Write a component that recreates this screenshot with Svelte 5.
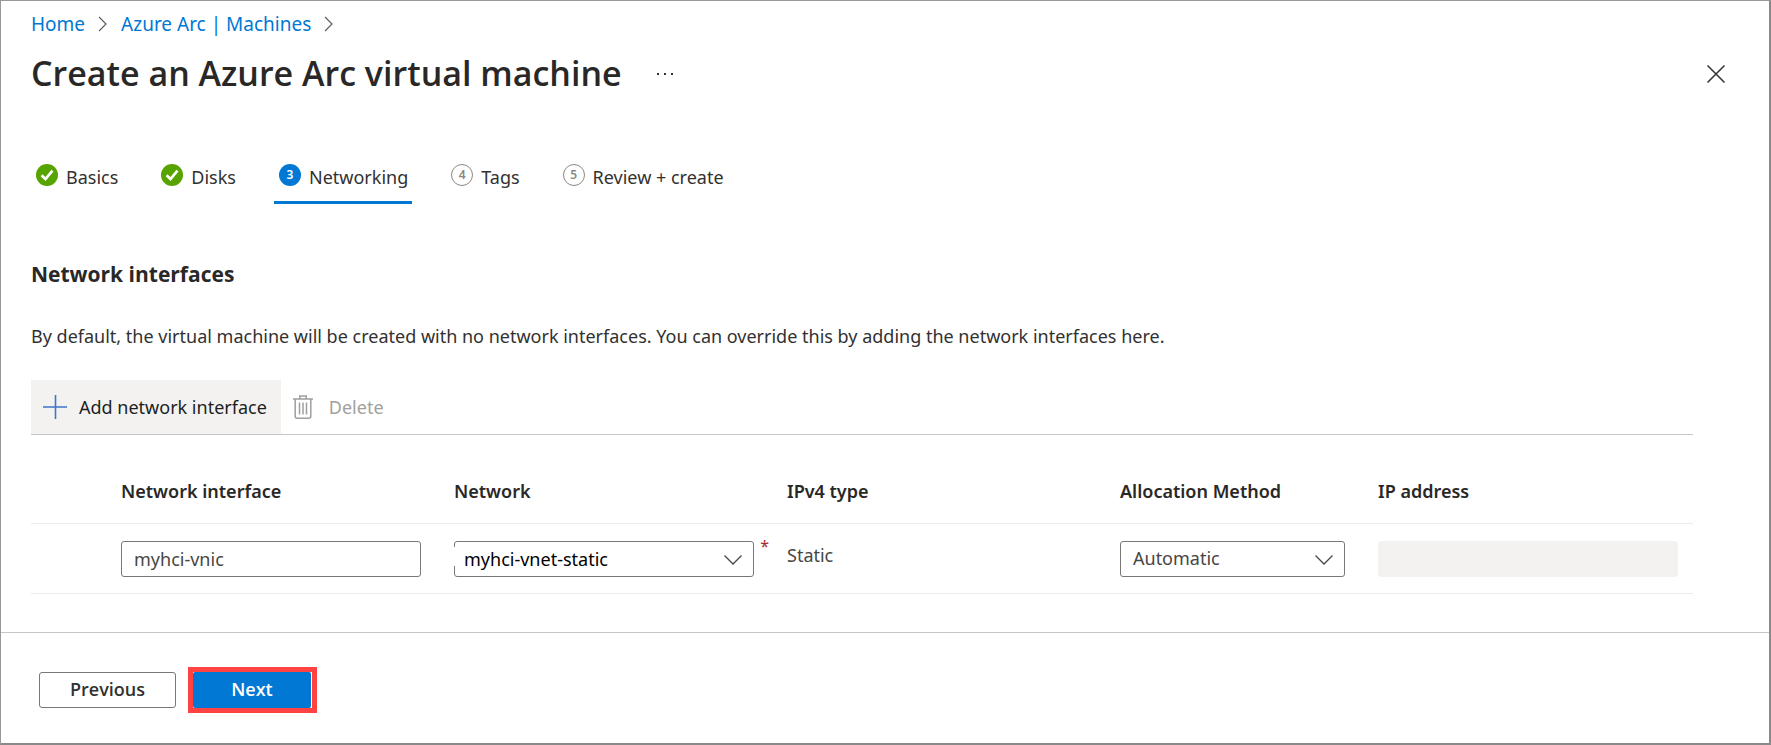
<script>
  const steps = [
    { label: 'Basics', state: 'done' },
    { label: 'Disks', state: 'done' },
    { label: 'Networking', state: 'current' },
    { label: 'Tags', state: 'todo' },
    { label: 'Review + create', state: 'todo' }
  ];
  let nicName = $state('myhci-vnic');
  let network = $state('myhci-vnet-static');
  let allocation = $state('Automatic');
</script>

{#snippet crumbArrow()}
  <svg class="crumb-arrow" width="10" height="16" viewBox="0 0 10 16" aria-hidden="true"><path d="M1 1l7 7-7 7" /></svg>
{/snippet}

{#snippet chevron()}
  <svg class="chevron" width="18" height="10" viewBox="0 0 18 10" aria-hidden="true"><path d="M.5.5L9 9 17.5.5" /></svg>
{/snippet}

<main>
  <header>
    <nav class="crumbs" aria-label="Breadcrumb">
      <a href="#home">Home</a>
      {@render crumbArrow()}
      <a href="#machines">Azure Arc | Machines</a>
      {@render crumbArrow()}
    </nav>
    <div class="title-row">
      <h1>Create an Azure Arc virtual machine</h1>
      <button class="icon-button" aria-label="More">
        <svg width="18" height="4" viewBox="0 0 18 4"><path d="M1 1h2v2H1zM8 1h2v2H8zM15 1h2v2h-2z" fill="#323130" /></svg>
      </button>
      <button class="icon-button close" aria-label="Close">
        <svg width="18" height="18" viewBox="0 0 18 18"><path d="M.5.5l17 17M17.5.5l-17 17" fill="none" stroke="#323130" stroke-width="1.5" /></svg>
      </button>
    </div>
  </header>

  <nav class="steps" aria-label="Steps">
    {#each steps as step, i}
      <button class="step {step.state}">
        <span class="badge">
          {#if step.state === 'done'}
            <svg width="22" height="22" viewBox="0 0 22 22" aria-hidden="true"><path d="M5.5 11.2l4 3.8 7-8.3" fill="none" stroke="#fff" stroke-width="2.7" /></svg>
          {:else}{i + 1}{/if}
        </span>
        <span class="step-label">{step.label}</span>
      </button>
    {/each}
  </nav>

  <section>
    <h2>Network interfaces</h2>
    <p>By default, the virtual machine will be created with no network interfaces. You can override this by adding the network interfaces here.</p>

    <div class="toolbar">
      <button class="tool add">
        <svg width="24" height="24" viewBox="0 0 24 24" aria-hidden="true"><path d="M12.5 0v24M0 12h24" fill="none" stroke="#3f74c6" stroke-width="1.6" /></svg>
        Add network interface
      </button>
      <button class="tool delete" disabled>
        <svg width="20" height="24" viewBox="0 0 20 24" aria-hidden="true"><g fill="none" stroke="#a19f9d" stroke-width="1.5"><path d="M0 4h20M6.8 4V1h6.4v3M2.2 4v17.2q0 2 2 2h11.6q2 0 2-2V4" /><path d="M6.5 7.5v12M10 7.5v12M13.5 7.5v12" /></g></svg>
        Delete
      </button>
    </div>

    <table>
      <colgroup><col class="pick" /><col class="wide" /><col class="wide" /><col class="wide" /><col class="method" /><col class="address" /></colgroup>
      <thead>
        <tr>
          <td></td>
          <th id="nic">Network interface</th>
          <th id="net">Network</th>
          <th id="type">IPv4 type</th>
          <th id="alloc">Allocation Method</th>
          <th id="ip">IP address</th>
        </tr>
      </thead>
      <tbody>
        <tr>
          <td></td>
          <td><input class="field" type="text" aria-labelledby="nic" bind:value={nicName} /></td>
          <td>
            <div class="combo network">
              <select class="field" aria-labelledby="net" bind:value={network} required><option>myhci-vnet-static</option></select>
              {@render chevron()}
              <span class="required">*</span>
            </div>
          </td>
          <td class="plain">Static</td>
          <td>
            <div class="combo">
              <select class="field" aria-labelledby="alloc" bind:value={allocation}><option>Automatic</option></select>
              {@render chevron()}
            </div>
          </td>
          <td class="last"><input class="field" type="text" aria-labelledby="ip" disabled /></td>
        </tr>
      </tbody>
    </table>
  </section>

  <footer>
    <button class="previous">Previous</button>
    <div class="highlight"><button class="next">Next</button></div>
  </footer>
</main>

<style>
  :global(body) { margin: 0; background: #fff; }
  * { box-sizing: border-box; }
  main {
    display: flex;
    flex-direction: column;
    min-height: 100vh;
    border: 1px solid #999;
    border-right: 2px solid #8a8a8a;
    border-bottom: 2px solid #8a8a8a;
    color: #323130;
    font: 18px/24px "Segoe UI", "Noto Sans", "Open Sans", sans-serif;
  }
  button, input, select { font: inherit; color: inherit; margin: 0; }
  button { border: 0; padding: 0; background: none; }
  h1, h2, p { margin: 0; }
  h1, h2, footer button { font-family: "Segoe UI", "Open Sans", "Noto Sans", sans-serif; }
  header { padding: 11px 44px 0 30px; }
  .crumbs { display: flex; align-items: center; gap: 13px; font-size: 19px; }
  .crumbs a { color: #0078d4; text-decoration: none; }
  .crumb-arrow { fill: none; stroke: #605e5c; stroke-width: 1.2; }
  .title-row { display: flex; align-items: center; margin-top: 15px; }
  h1 { padding-bottom: 2px; font-size: 34px; line-height: 44px; font-weight: 600; color: #292827; }
  .icon-button { display: flex; margin-left: 34px; }
  .close { margin-left: auto; }

  .steps { display: flex; gap: 34px; padding: 56px 30px 0 30px; }
  .step { display: flex; gap: 8px; padding: 11px 4px 12px 5px; border-bottom: 3px solid transparent; }
  .step-label { padding-top: 1px; }
  .current { border-bottom-color: #0078d4; }
  .badge {
    display: flex;
    flex: none;
    align-items: center;
    justify-content: center;
    width: 22px;
    height: 22px;
    border: 1px solid #8a8886;
    border-radius: 50%;
    color: #8a8886;
    font-size: 12px;
    font-weight: 600;
    line-height: 20px;
  }
  .done .badge { border: 0; background: #57a300; }
  .current .badge { border: 0; background: #0078d4; color: #fff; }

  section { padding: 56px 76px 38px 30px; }
  h2 { font-size: 21px; line-height: 28px; font-weight: 700; color: #292827; }
  p { margin-top: 36px; }
  .toolbar { display: flex; margin-top: 32px; border-bottom: 1px solid #c8c6c4; }
  .tool { display: flex; align-items: center; gap: 12px; height: 54px; padding: 0 14px 0 12px; }
  .add { background: #f3f2f1; color: #201f1e; }
  .delete { gap: 16px; color: #a19f9d; }

  table { width: 100%; table-layout: fixed; border-collapse: collapse; }
  .pick { width: 90px; }
  .wide { width: 333px; }
  .method { width: 258px; }
  .address { width: 315px; }
  th, td { padding: 0 33px 0 0; text-align: left; }
  th { height: 88px; padding-top: 24px; font-weight: 600; color: #292827; }
  tr { border-bottom: 1px solid #edebe9; }
  tbody td { height: 70px; padding-top: 1px; vertical-align: middle; }
  tbody td.last { padding-right: 15px; }
  tbody td.plain { padding-bottom: 8px; color: #484644; }
  .field {
    display: block;
    width: 100%;
    height: 36px;
    padding: 0 12px;
    border: 1px solid #7a7876;
    border-radius: 3px;
    background: #fff;
    color: #484644;
    appearance: none;
  }
  .field:disabled { border-color: #f3f2f1; background: #f3f2f1; }
  select.field { padding-bottom: 2px; }
  .combo { position: relative; }
  .chevron { position: absolute; top: 14px; right: 12px; fill: none; stroke: #484644; stroke-width: 1.3; pointer-events: none; }
  .network .field { padding-bottom: 0; padding-left: 9px; color: #000; }
  .network::before { content: ""; position: absolute; left: 0; top: 6px; width: 2px; height: 19px; background: #fff; }
  .required { position: absolute; right: -15px; top: -7px; font-size: 16px; color: #a4262c; }

  footer { display: flex; align-items: center; gap: 12px; padding: 34px 38px 30px; border-top: 1px solid #c8c6c4; }
  footer button { height: 36px; padding-bottom: 2px; font-weight: 600; }
  .previous { width: 137px; border: 1px solid #7a7876; border-radius: 3px; }
  .highlight { padding-right: 1px; border: 5px solid #ff4343; }
  .next { display: block; width: 118px; border-radius: 2px; background: #0078d4; color: #fff; }
</style>
